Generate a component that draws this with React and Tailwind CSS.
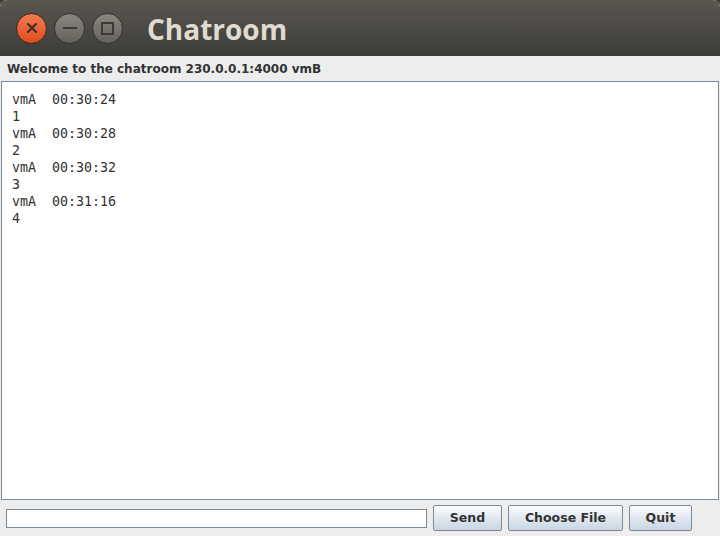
import React from "react";

const lines = [
  ["vmA  00:30:24", "1"],
  ["vmA  00:30:28", "2"],
  ["vmA  00:30:32", "3"],
  ["vmA  00:31:16", "4"],
];

function Btn({ children, w }) {
  return (
    <button
      className={`h-[26px] ${w} rounded-[2px] border border-[#7a8a99] bg-gradient-to-b from-[#fbfcfd] to-[#c8d6e3] text-[12.5px] font-bold text-[#333333] flex items-center justify-center`}
      style={{ fontFamily: '"DejaVu Sans", sans-serif' }}
    >
      {children}
    </button>
  );
}

export default function App() {
  return (
    <div className="w-[720px] h-[536px] bg-[#3c3b37] overflow-hidden">
      <div className="w-[720px] h-[536px] rounded-t-[7px] overflow-hidden flex flex-col bg-[#ededed]">
        {/* title bar */}
        <div className="h-[56px] shrink-0 bg-gradient-to-b from-[#5a5751] to-[#3d3c38] flex items-center pl-[16px]">
          <div className="w-[31px] h-[31px] rounded-full border border-[#3a2a22] bg-gradient-to-b from-[#f47a4f] to-[#df4a1c] flex items-center justify-center">
            <svg width="14" height="14" viewBox="0 0 14 14">
              <path d="M3 3 L11 11 M11 3 L3 11" stroke="#3c2c24" strokeWidth="2" strokeLinecap="round" />
            </svg>
          </div>
          <div className="ml-[7px] w-[31px] h-[31px] rounded-full border border-[#34332f] bg-gradient-to-b from-[#8a8781] to-[#64625c] flex items-center justify-center">
            <div className="w-[14px] h-[2px] bg-[#3b3a36]" />
          </div>
          <div className="ml-[7px] w-[31px] h-[31px] rounded-full border border-[#34332f] bg-gradient-to-b from-[#8a8781] to-[#64625c] flex items-center justify-center">
            <div className="w-[13px] h-[13px] border-2 border-[#3b3a36]" />
          </div>
          <div
            className="ml-[24px] text-[28px] font-bold text-[#dfdbd2] leading-none mt-[1px]"
            style={{ fontFamily: '"Open Sans", sans-serif' }}
          >
            Chatroom
          </div>
        </div>
        {/* welcome */}
        <div
          className="h-[25px] shrink-0 flex items-center pl-[7px] text-[12px] font-bold text-[#333333]"
          style={{ fontFamily: '"DejaVu Sans", sans-serif' }}
        >
          Welcome to the chatroom 230.0.0.1:4000 vmB
        </div>
        {/* text area */}
        <div
          className="mx-[1px] h-[419px] shrink-0 border border-[#7a8a99] bg-white pl-[10px] pt-[9px] text-[13.3px] leading-[17px] text-[#333333] whitespace-pre"
          style={{ fontFamily: '"DejaVu Sans Mono", monospace' }}
        >
          {lines.map(([a, b], i) => (
            <React.Fragment key={i}>
              <div>{a}</div>
              <div>{b}</div>
            </React.Fragment>
          ))}
        </div>
        {/* bottom */}
        <div className="flex-1 flex items-center pl-[6px] gap-[6px]">
          <div className="w-[421px] h-[19px] border border-[#7a8a99] bg-white" />
          <Btn w="w-[69px]">Send</Btn>
          <Btn w="w-[115px]">Choose File</Btn>
          <Btn w="w-[63px]">Quit</Btn>
        </div>
      </div>
    </div>
  );
}
